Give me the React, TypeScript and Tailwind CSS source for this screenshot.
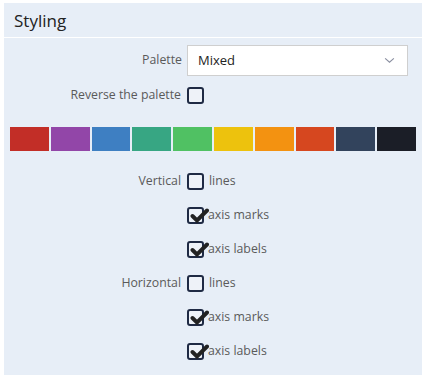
import * as React from "react";

const palette = [
  "#c22e27",
  "#9246a8",
  "#3e7fc2",
  "#37a683",
  "#50c163",
  "#edc20d",
  "#f39211",
  "#d6471f",
  "#32435c",
  "#1b1e27",
];

function Checkbox({ checked }: { checked?: boolean }) {
  return (
    <span className="relative inline-block w-[17px] h-[17px] shrink-0 rounded-[3px] border-2 border-[#1f2a44] bg-[#eef2f8]">
      {checked && (
        <svg
          viewBox="0 0 20 20"
          className="absolute left-[0px] top-[-4px] w-[20px] h-[20px]"
        >
          <path
            d="M3.5 11 L8 15.5 L18 5.5"
            fill="none"
            stroke="#222"
            strokeWidth="3.9"
            strokeLinecap="round"
            strokeLinejoin="miter"
          />
        </svg>
      )}
    </span>
  );
}

function Row({
  label,
  text,
  checked,
}: {
  label?: string;
  text: string;
  checked?: boolean;
}) {
  return (
    <div className="flex items-center h-[17px]">
      <span className="w-[177px] pr-[6px] text-right">{label}</span>
      <Checkbox checked={checked} />
      <span className={checked ? "ml-[4px]" : "ml-[5px]"}>{text}</span>
    </div>
  );
}

export default function App() {
  return (
    <div
      className="min-h-screen bg-white pt-[3px] pl-[4px]"
      style={{ fontFamily: '"Open Sans", sans-serif' }}
    >
      <div className="w-[418px] h-[372px] bg-[#e7eef7]">
        <div className="h-[35px] border-b border-white flex items-center pt-[2px] pl-[10px] text-[17px] text-[#222]">
          Styling
        </div>
        <div className="px-[6px] pt-[7px] pb-4 text-[12.3px] text-[#5a5a5a]">
          <div className="flex items-center h-[31px]">
            <span className="w-[177px] pr-[5px] text-right">Palette</span>
            <div className="w-[221px] h-[31px] bg-white border border-[#cfcfcf] flex items-center justify-between pl-[10px] pr-[12px] text-[13px] text-[#222]">
              Mixed
              <svg viewBox="0 0 12 8" className="w-[11px] h-[7px]">
                <path
                  d="M1 1.5 L6 6 L11 1.5"
                  fill="none"
                  stroke="#8a8fa0"
                  strokeWidth="1.3"
                />
              </svg>
            </div>
          </div>
          <div className="mt-[11px]">
            <Row label="Reverse the palette" text="" />
          </div>
          <div className="mt-[23px] flex gap-[2px] h-[24px]">
            {palette.map((c) => (
              <div key={c} className="flex-1" style={{ background: c }} />
            ))}
          </div>
          <div className="mt-[22px] flex flex-col gap-[17px]">
            <Row label="Vertical" text="lines" />
            <Row text="axis marks" checked />
            <Row text="axis labels" checked />
            <Row label="Horizontal" text="lines" />
            <Row text="axis marks" checked />
            <Row text="axis labels" checked />
          </div>
        </div>
      </div>
    </div>
  );
}
